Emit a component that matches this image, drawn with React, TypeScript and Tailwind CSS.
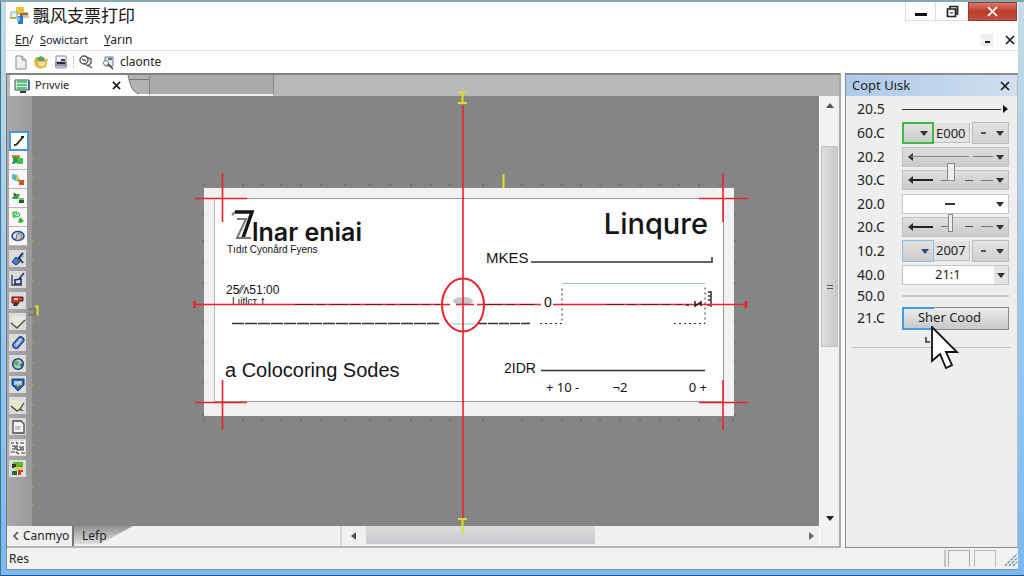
import type { ReactNode } from "react";

const toolIcons: ReactNode[] = [
  <>
    <path d="M3 12h2L12 4M10 4h3" stroke="#2b1d12" strokeWidth="1.8" fill="none" />
    <path d="M4 13l2-1" stroke="#c98a3a" strokeWidth="1" />
  </>,
  <>
    <path d="M2 3h8v3H2z" fill="#d9813c" />
    <path d="M3 5h5v6H3z" fill="#27a344" />
    <path d="M8 6h5v6H7z" fill="#45c05a" />
    <path d="M2 10h3v2H2z" fill="#4c8fc2" />
  </>,
  <>
    <path d="M2 3l5 1-1 6-4-2z" fill="#55b6b0" />
    <path d="M7 3l2 5-3 2z" fill="#d7c23e" />
    <path d="M9 9h5v5H9z" fill="#df4a2c" />
    <path d="M6 9l4-1v4z" fill="#4fbf52" />
  </>,
  <>
    <path d="M2 8l3-4h5L8 9H3z" fill="#39a33d" />
    <path d="M3 3l3 1-1 2z" fill="#222" />
    <path d="M9 8h5v5H9z" fill="#2b5a2e" />
    <path d="M9 8h5v2H9z" fill="#62c65e" />
  </>,
  <>
    <path d="M2 3l5-1 1 6-5 1z" fill="#48c751" />
    <path d="M8 3l2 3-2 2" stroke="#2d9a3a" fill="none" />
    <path d="M8 13l2-5 4 4-3 2z" fill="#2fb43c" />
    <path d="M4 4l3 3" stroke="#fff" />
  </>,
  <>
    <ellipse cx="8" cy="8" rx="6" ry="4.5" fill="#dfe9f6" stroke="#29478f" strokeWidth="1.6" />
    <path d="M6 13c0-5 1-8 3-8s3 4 3 6z" fill="#d8c690" stroke="#3465b8" />
  </>,
  <>
    <path d="M2 11l4-5 4 5-4 3z" fill="#4b7bc2" stroke="#1c3670" />
    <path d="M8 8l5-6M9 7l4 5" stroke="#23334f" strokeWidth="2" />
    <path d="M11 6l3-1" stroke="#7fb0e2" strokeWidth="1.5" />
  </>,
  <>
    <path d="M2 3v10h10" stroke="#3a4660" strokeWidth="1.4" fill="none" />
    <path d="M5 12V8l6-1v5zM9 7l5-6" stroke="#26355e" strokeWidth="1.6" fill="#d5e1f2" />
  </>,
  <>
    <path d="M2 4h11v4H9v2H2z" fill="#d23a2a" stroke="#5a1b14" />
    <path d="M4 10h5l-2 3H3z" fill="#3d2f2c" />
    <path d="M4 5h4v2H4z" fill="#f5c8ba" />
  </>,
  <>
    <path d="M0 4l5-2h10v4l-6 8z" fill="#e6eadb" />
    <path d="M1 9l6 5 8-8" stroke="#4b5140" strokeWidth="1.3" fill="none" />
  </>,
  <>
    <rect x="5" y="1" width="6" height="13" rx="3" transform="rotate(42 8 8)" fill="#7f9fe0" stroke="#24418c" strokeWidth="1.5" />
    <path d="M6 10l5-6" stroke="#dfe8ff" strokeWidth="1.3" />
  </>,
  <>
    <circle cx="8" cy="8" r="5.3" fill="#a8cfd9" stroke="#21426e" strokeWidth="1.6" />
    <path d="M5 4l4 2-2 4-3-2z" fill="#5aab45" />
    <path d="M9 9l3-2v4z" fill="#377a3d" />
  </>,
  <>
    <path d="M2 2h12v6l-6 6-6-6z" fill="#2467bb" stroke="#173c72" />
    <path d="M4 4h8v4H4z" fill="#b9cfe0" />
    <path d="M5 7h6l-3 3z" fill="#c8b35c" />
  </>,
  <>
    <path d="M1 2l10 1 2 6-6 4-6-5z" fill="#e8e6cd" />
    <path d="M1 8l6 5 4-2M14 5l-4 6 3 2" stroke="#45412f" strokeWidth="1.3" fill="none" />
  </>,
  <>
    <path d="M3 2h8l3 3v9H3z" fill="#f3f3f3" stroke="#4a4a4a" strokeWidth="1.3" />
    <path d="M5 8h6M5 10h5" stroke="#9a9a9a" />
  </>,
  <>
    <rect x="1" y="1" width="14" height="14" fill="#f7f7f7" />
    <path d="M1 3h3M6 2l2 2M10 3h4M2 6h3v3H2M7 5v5h4V7H9M13 6v5M1 12h4M6 12l3 2M11 13h4" stroke="#333" strokeWidth="1.2" fill="none" />
  </>,
  <>
    <path d="M3 1h10v5H3z" fill="#5cb531" />
    <path d="M2 3h4v4H2z" fill="#20411f" />
    <path d="M4 6h9l-2 5-6-1z" fill="#d8d14f" />
    <path d="M8 9h5v5H8z" fill="#c83f31" />
    <path d="M2 10h5v4H2z" fill="#2a6940" />
    <path d="M11 11h4v4h-4z" fill="#f2dcd6" />
  </>,
];

function Arrow({ dir = "down", color = "#333333" }: { dir?: "up" | "down" | "left" | "right"; color?: string }) {
  const paths = {
    up: "M4 2l4 5H0z",
    down: "M0 2h8L4 7z",
    left: "M6 0v8L1 4z",
    right: "M2 0l5 4-5 4z",
  };
  return (
    <svg width="8" height="8" viewBox="0 0 8 8" className="shrink-0" aria-hidden="true">
      <path d={paths[dir]} fill={color} />
    </svg>
  );
}

function Cross({ size = 10, color = "#1a1a1a" }: { size?: number; color?: string }) {
  return (
    <svg width={size} height={size} viewBox="0 0 10 10" aria-hidden="true">
      <path d="M1 1l8 8M9 1L1 9" stroke={color} strokeWidth="1.7" />
    </svg>
  );
}

function Row({ label, height, children }: { label: string; height: string; children: ReactNode }) {
  return (
    <div className={`flex items-center ${height}`}>
      <span className="w-[45px] shrink-0 text-sm">{label}</span>
      <div className="relative flex min-w-0 flex-1 items-center">{children}</div>
    </div>
  );
}

function ValueRow({ label, height, value, frame, arrow }: { label: string; height: string; value: string; frame: string; arrow: string }) {
  return (
    <Row label={label} height={height}>
      <button aria-label={`${label} style`} className={`flex h-[22px] w-8 items-center justify-end bg-linear-to-b from-[#e2e2e2] to-[#cbcbcb] pr-1 ${frame}`}>
        <Arrow color={arrow} />
      </button>
      <input aria-label={`${label} value`} defaultValue={value} className="h-5 w-9 min-w-0 flex-1 border-r border-b border-[#bdbdbd] bg-[#e2e2e2] pl-0.5 text-[13px]" />
      <button aria-label={`${label} unit`} className="ml-0.5 flex h-[22px] w-[37px] items-center justify-between border border-[#bcbcbc] bg-linear-to-b from-[#e4e4e4] to-[#cfcfcf] pr-1 pl-2">
        <span className="h-0.5 w-[5px] bg-[#555]" />
        <Arrow />
      </button>
    </Row>
  );
}

function SliderRow({ label, height, thumb }: { label: string; height: string; thumb: string }) {
  return (
    <Row label={label} height={height}>
      <div className="flex h-5 flex-1 items-center border border-[#c2c2c2] bg-linear-to-b from-[#dfdfdf] to-[#cacaca] px-1">
        <Arrow dir="left" />
        <span className="-ml-1 h-0.5 w-[22px] bg-[#222]" />
        <span className="ml-2 h-px w-2 bg-[#777]" />
        <span className="ml-4 h-px w-2 bg-[#555]" />
        <span className="ml-2 h-px w-3 bg-[#777]" />
        <span className="ml-auto"><Arrow /></span>
      </div>
      <input
        type="range"
        aria-label={`${label} position`}
        defaultValue={45}
        className={`absolute inset-x-0 h-5 w-full appearance-none bg-transparent [&::-webkit-slider-thumb]:h-[18px] [&::-webkit-slider-thumb]:appearance-none [&::-webkit-slider-thumb]:border [&::-webkit-slider-thumb]:border-[#888] [&::-webkit-slider-thumb]:bg-[#eeeeee] ${thumb}`}
      />
    </Row>
  );
}

const topTicks = [204, 222, 243, 262, 281, 301, 321, 345, 370, 390, 411, 431, 450, 483, 522, 542, 562, 581, 600, 620, 640, 660, 679, 699, 720, 733];
const sideTicks = [214, 241, 262, 283, 322, 342, 362, 382, 415];
const rulerTicks = [158, 178, 198, 218, 241, 260, 281, 322, 342, 363, 385, 405, 425, 445, 466, 487, 505];

function Cheque() {
  return (
    <article className="absolute top-[92px] left-[172px] h-[228px] w-[530px] bg-[#f1f1f1] text-[#151515]">
      <div className="absolute inset-x-2.5 top-2.5 bottom-3.5 border border-[#9b9b9b] border-l-[#a8bcc0] bg-[#fdfdfd]" />
      <h1 className="absolute top-7 left-12 font-['Inter',sans-serif] text-[25px]/8 font-semibold whitespace-nowrap">lnar eniai</h1>
      <p className="absolute top-[54px] left-[23px] font-['Liberation_Sans',sans-serif] text-[10px]/4 whitespace-nowrap">Tıdıt Cyonård Fyens</p>
      <h2 className="absolute top-5 right-[26px] font-['Inter',sans-serif] text-[29px]/8 font-medium">Linqure</h2>
      <span className="absolute top-[60px] left-[282px] font-['Liberation_Sans',sans-serif] text-[15px]/5">MKES</span>
      <p className="absolute top-24 left-[22px] font-['Liberation_Sans',sans-serif] text-xs/3 whitespace-nowrap">25⁄⁄ʌ51:00</p>
      <p className="absolute top-27 left-7 font-['Liberation_Sans',sans-serif] text-[10px]/3 whitespace-nowrap">Lıitlст. t</p>
      <span className="absolute top-[104px] left-[340px] font-['Liberation_Sans',sans-serif] text-sm/5">0</span>
      <p className="absolute top-[170px] left-[21px] font-['Liberation_Sans',sans-serif] text-xl/6 whitespace-nowrap">a Colocoring Sodes</p>
      <span className="absolute top-[170px] left-[300px] font-['Liberation_Sans',sans-serif] text-sm/5">2IDR</span>
      <div className="absolute top-[189px] left-[342px] flex w-[161px] justify-between text-[13px]/5">
        <span>+ 10 -</span>
        <span className="mr-7">¬2</span>
        <span>0 +</span>
      </div>
    </article>
  );
}

function Guides() {
  return (
    <svg className="pointer-events-none absolute top-0 left-0 overflow-visible" width="788" height="430" viewBox="32 96 788 430" aria-hidden="true">
      <g stroke="#41661c">
        {topTicks.map((x) => <path key={x} d={`M${x} 184v2M${x} 418v3`} opacity=".7" />)}
        {sideTicks.map((y) => <path key={y} d={`M202 ${y}h2M734 ${y}h2`} opacity=".7" />)}
        {rulerTicks.map((y) => <path key={y} d={`M32 ${y}h2`} stroke="#b3ab5a" />)}
      </g>
      <path d="M235 212h17l-9 26" stroke="#151515" strokeWidth="3.5" fill="none" />
      <path d="M232 215l3-3M237 219h9l-9 19h14" stroke="#777" strokeWidth="2" fill="none" />
      <g stroke="#333" strokeWidth="1.5" fill="none">
        <path d="M531 262h181v-5M541 370.500h164" />
        <path d="M232 323.500h208" strokeDasharray="12 1" />
        <path d="M477 323.500h53" strokeDasharray="10 1" />
        <path d="M540 323.500h22V286M674 323.500h31V286" strokeDasharray="2 3" strokeWidth="1" />
        <path d="M711 291v16M708 292h3M708 296h3M708 300h3M707 305h3" />
      </g>
      <path d="M562 283.500h143" stroke="#a7c6d3" />
      <ellipse cx="463" cy="301" rx="10" ry="4" fill="#c2c7c7" />
      <path d="M453 324h21" stroke="#7dcfc4" />
      <g stroke="#e9222f" strokeWidth="1.600" fill="none">
        <path d="M463 105v413M195 304.500h255M456 304.500h18M477 304.500h64M553 304.500h192" />
        <ellipse cx="463" cy="305" rx="21" ry="26.500" strokeWidth="2" />
        <path d="M195 198.500h52M222.500 173v49M699 198.500h49M723 173v49M195 402.500h52M222.500 380v50M699 402.500h49M723 380v50" />
        <path d="M194.500 301v7M746 301v7" strokeWidth="2.500" />
      </g>
      <path d="M295 304.500h145M485 304.500h50M606 304.500h76" stroke="#641d1d" strokeDasharray="18 3 9 5" />
      <path d="M686 305h3M695 301v5l6-4v4" stroke="#222" strokeWidth="1.500" fill="none" />
      <g stroke="#dce126" strokeWidth="2" fill="none">
        <path d="M458 92.500h9M462.500 93v11M458 103h9M503.500 174v14" />
        <path d="M458 519h9M462.500 519v15" />
        <path d="M35 306.500h2.500v9" />
      </g>
      <path d="M28 309h7v6h-7" stroke="#69695c" fill="#92928a" />
    </svg>
  );
}

export default function App() {
  return (
    <div className="flex min-h-screen flex-col border-t-2 border-t-[#82aaaa] border-b border-b-[#1e5589] border-l border-l-[#3a7594] bg-linear-to-b from-[#c5dce4] via-[#9bcaf0] to-[#7db8ef] pr-1.5 pb-[5px] pl-[5px] font-['Noto_Sans','Noto_Sans_CJK_SC',sans-serif] text-xs text-[#242424]">
      <header className="bg-[#fdfdfd]">
        <div className="flex h-[28px] items-start">
          <svg width="22" height="22" viewBox="0 0 22 22" className="mt-0.5 ml-[3px]" aria-hidden="true">
            <path d="M7 3h8v5h4v3H7z" fill="#efc43a" />
            <path d="M2 8h6v6H2z" fill="#e9f2f7" stroke="#7ba9be" />
            <path d="M1 13h6v2H1z" fill="#a5b93b" />
            <path d="M11 9h8v5h-8z" fill="#94684b" />
            <path d="M14 11h6v3h-6z" fill="#d3c3b8" />
            <path d="M9 12h5v8H9z" fill="#2979d4" />
            <path d="M8 13h3v4H8z" fill="#7eb7ec" />
          </svg>
          <span className="mt-px ml-0.5 font-['Noto_Sans_CJK_SC',sans-serif] text-[17px]/6 text-[#161616]">飄风支票打印</span>
          <div className="ml-auto flex h-[19px]">
            <button aria-label="Minimize" className="flex w-[30px] items-center justify-center border-b border-l border-[#ddd]"><span className="mt-1.5 h-[3px] w-3 bg-[#111]" /></button>
            <button aria-label="Restore" className="flex w-[33px] items-center justify-center border-b border-l border-[#ddd]">
              <svg width="13" height="13" viewBox="0 0 13 13" aria-hidden="true"><path d="M1.500 4h8v7.500h-8zM4 4V1.500h7.500V9H9.500" fill="none" stroke="#222" strokeWidth="1.700" /><path d="M4 7h3v2H4z" fill="#888" /></svg>
            </button>
            <button aria-label="Close" className="mr-px flex w-[49px] items-center justify-center border border-[#963b31] bg-linear-to-b from-[#d77a6a] via-[#bd3a2c] to-[#c4503f]"><Cross size={11} color="#ffffff" /></button>
          </div>
        </div>
        <nav className="flex h-[21px] items-center border-b border-[#e4e4e4] pr-[3px] pl-[9px]">
          <button className="w-[25px] text-left"><u>En</u>/</button>
          <button className="w-[64px] text-left text-[11px]"><u>S</u>owictart</button>
          <button className="text-left"><u>Y</u>arın</button>
          <button aria-label="Minimize document" className="mr-3 ml-auto flex h-3 w-3 items-center justify-center bg-[#eee]"><span className="mt-1 h-0.5 w-[5px] bg-[#222]" /></button>
          <button aria-label="Close document"><Cross /></button>
        </nav>
        <div className="flex h-[22px] items-center pl-[7px]">
          <button aria-label="New">
            <svg width="16" height="16" viewBox="0 0 16 16" aria-hidden="true"><path d="M3 2h6l4 4v9H3z" fill="#f0f0f0" stroke="#8c8c8c" /><path d="M9 2v4h4" fill="#ccc" stroke="#8c8c8c" /></svg>
          </button>
          <button aria-label="Open" className="ml-1">
            <svg width="16" height="16" viewBox="0 0 16 16" aria-hidden="true"><path d="M1 6l2-3h4l2 2h6l-2 8-6 2-5-3z" fill="#e2b848" /><path d="M4 4l4-2 4 2-1 3H5z" fill="#61a66e" /><path d="M5 8h8l-2 4H6z" fill="#f6dfa0" /></svg>
          </button>
          <button aria-label="Save" className="ml-1">
            <svg width="16" height="16" viewBox="0 0 16 16" aria-hidden="true"><path d="M3 2h10v6H3z" fill="#f4f5fa" stroke="#8a8a9c" /><path d="M8 5h4v2H8z" fill="#3d3d66" /><path d="M2 8h12v5H2z" fill="#8d8da4" /><path d="M4 8h8v2H4z" fill="#292941" /><path d="M3 12h10v2H3z" fill="#dadae3" stroke="#9898a6" /></svg>
          </button>
          <span className="mx-1 h-3 border-l border-dotted border-[#aaa]" />
          <button aria-label="Find">
            <svg width="16" height="16" viewBox="0 0 16 16" fill="none" stroke="#5a6069" aria-hidden="true"><circle cx="6" cy="6" r="4" strokeWidth="1.500" /><path d="M4 5l4 2M8 3l5 2v4l-3 3M10 11l4 3M6 9l4 3" strokeWidth="1.500" /></svg>
          </button>
          <button className="ml-2 flex items-center gap-1">
            <svg width="14" height="15" viewBox="0 0 14 15" fill="none" aria-hidden="true"><path d="M3 2h8v9H3z" fill="#e9eef3" stroke="#66758a" /><circle cx="4" cy="8" r="2.500" fill="#fff" stroke="#66758a" /><path d="M6 9l5 5M6 4h4" stroke="#33405a" strokeWidth="1.500" /></svg>
            claonte
          </button>
        </div>
      </header>

      <main className="flex min-h-0 flex-1 gap-1 border-l border-[#777] bg-[#f8f8f8]">
        <section className="flex min-w-0 flex-1 flex-col border-t-2 border-r-2 border-b-2 border-t-[#818181] border-r-[#a9a9a9] border-b-[#b5b5b5]">
          <div className="flex h-[21px] bg-[#b8b8b8]">
            <div className="ml-[3px] flex w-[117px] items-center bg-[#fdfdfd] pr-1.5 pl-1">
              <svg width="17" height="16" viewBox="0 0 17 16" aria-hidden="true"><path d="M1 2h14v10H1z" fill="#d7efe3" stroke="#2f4e58" /><path d="M3 4h10M3 7h10M3 10h10" stroke="#31b55e" strokeWidth="1.500" /><path d="M15 3v9" stroke="#4268a4" strokeWidth="2" /><path d="M6 14h6" stroke="#2c3534" strokeWidth="2" /></svg>
              <span className="ml-1 text-[11px]">Prıvvie</span>
              <button aria-label="Close tab" className="ml-auto"><Cross size={9} /></button>
            </div>
            <svg width="22" height="21" viewBox="0 0 22 21" aria-hidden="true"><path d="M0 0h1c2 9 3 16 11 19h10v2H0z" fill="#fdfdfd" /><path d="M1 0h21v19H12C4 16 3 9 1 0z" fill="#b1b1b1" /><path d="M1 0c2 9 3 16 11 19M2 4.500h20" stroke="#777" fill="none" /></svg>
            <div className="w-[125px] border-r border-b-2 border-l border-r-[#888] border-b-[#eeeeee] border-l-[#888] bg-[#aaaaaa]" />
          </div>
          <div className="flex flex-1">
            <div className="flex min-w-0 flex-1 flex-col">
              <div className="flex flex-1">
                <div className="flex w-[25px] flex-col items-start bg-linear-to-r from-[#aaaaaa] to-[#999999] pt-[35px] pl-0.5" role="toolbar" aria-label="Drawing tools">
                  {toolIcons.map((icon, i) => (
                    <button
                      key={i}
                      aria-label={`Tool ${i + 1}`}
                      className={
                        i === 0
                          ? "flex h-5 w-5 items-center justify-center border-2 border-[#4a97d8] bg-white"
                          : i < 6
                            ? "flex h-[19px] w-[18px] items-center justify-center border-b border-[#bbb3b8] bg-[#f8f6f7]"
                            : "mt-1 flex h-[17px] w-[17px] items-center justify-center bg-[#d9dbdc]"
                      }
                    >
                      <svg width="16" height="16" viewBox="0 0 16 16" className="shrink-0" aria-hidden="true">{icon}</svg>
                    </button>
                  ))}
                </div>
                <div className="relative z-10 min-h-[430px] flex-1 bg-[#858585]">
                  <Cheque />
                  <Guides />
                </div>
              </div>
              <div className="flex h-5 items-center bg-[#f0f0f0]">
                <button className="flex h-full w-[67px] items-center border-r-2 border-[#777] pl-1.5">
                  <svg width="6" height="8" viewBox="0 0 6 8" aria-hidden="true"><path d="M5 0L1 4l4 4" fill="none" stroke="#444" strokeWidth="1.500" /></svg>
                  <span className="ml-1">Canmyo</span>
                </button>
                <button className="relative h-full w-[60px] pl-2 text-left">
                  <svg className="absolute top-0 left-0" width="60" height="20" viewBox="0 0 60 20" aria-hidden="true"><defs><linearGradient id="fold" x1="0" y1="0" x2="0" y2="1"><stop stopColor="#909090" /><stop offset="1" stopColor="#dedede" /></linearGradient></defs><path d="M0 0h59L26 18H0z" fill="url(#fold)" /></svg>
                  <span className="relative">Lefp</span>
                </button>
                <div className="ml-auto flex h-full w-[59%] items-center border-l-2 border-[#dadada] pr-1 pl-2">
                  <Arrow dir="left" color="#555555" />
                  <div className="mx-2 flex h-full flex-1"><div className="h-[18px] w-[53%] bg-linear-to-b from-[#dcdcdf] to-[#c9c9cd]" /></div>
                  <Arrow dir="right" color="#666666" />
                </div>
              </div>
            </div>
            <div className="flex w-5 flex-col items-center border-l border-white bg-[#f1f1f1] pt-[5px] pb-6">
              <Arrow dir="up" color="#555555" />
              <div className="mt-[37px] flex h-[201px] w-[17px] flex-col items-center justify-center gap-0.5 border border-[#c2c2c2] bg-linear-to-r from-[#dededf] to-[#c8c8ca] pt-20">
                <span className="h-px w-1.5 bg-[#555]" />
                <span className="h-px w-1.5 bg-[#555]" />
              </div>
              <span className="mt-auto"><Arrow color="#222222" /></span>
            </div>
          </div>
        </section>

        <aside className="w-[173px] shrink-0 border border-t-2 border-[#8c8c8c] border-r-[#bbb] bg-[#eeeeee]">
          <div className="flex h-[21px] items-center justify-between bg-linear-to-r from-[#aec9e9] to-[#d0dff0] pr-[7px] pl-1.5 text-[13px]">
            Copt Uısk
            <button aria-label="Close panel"><Cross /></button>
          </div>
          <div className="pt-px pr-2 pl-[11px]">
            <Row label="20.5" height="h-6">
              <span className="h-px flex-1 bg-[#333]" />
              <Arrow dir="right" color="#111111" />
            </Row>
            <ValueRow label="60.C" height="h-6" value="E000" frame="border-2 border-[#3dba43]" arrow="#333333" />
            <Row label="20.2" height="h-[23px]">
              <div className="flex h-5 flex-1 items-center border border-[#c2c2c2] bg-linear-to-b from-[#dfdfdf] to-[#cacaca] px-1">
                <Arrow dir="left" />
                <span className="-ml-1 h-px w-[58px] bg-[#888]" />
                <span className="ml-1 h-px w-5 bg-[#777]" />
                <span className="ml-auto"><Arrow /></span>
              </div>
            </Row>
            <SliderRow label="30.C" height="h-6" thumb="[&::-webkit-slider-thumb]:w-2 [&::-webkit-slider-thumb]:-mt-4" />
            <Row label="20.0" height="h-[23px]">
              <button aria-label="20.0 line" className="relative flex h-5 flex-1 items-center justify-end border border-[#c8c8c8] bg-white pr-1">
                <span className="mr-[41px] h-0.5 w-2.5 bg-[#333]" />
                <Arrow />
              </button>
            </Row>
            <SliderRow label="20.C" height="h-[23px]" thumb="[&::-webkit-slider-thumb]:w-[5px] [&::-webkit-slider-thumb]:-mt-2" />
            <ValueRow label="10.2" height="h-[25px]" value="2007" frame="border border-[#8fbbe6]" arrow="#2f4c84" />
            <Row label="40.0" height="h-6">
              <select aria-label="40.0 ratio" className="h-5 flex-1 appearance-none border border-[#c2c2c2] bg-white pl-8 text-[13px]"><option>21:1</option></select>
              <span className="pointer-events-none absolute right-px flex h-[18px] w-3.5 items-center justify-center bg-[#e4e4e4]"><Arrow /></span>
            </Row>
            <Row label="50.0" height="h-[17px]"><span className="h-0.5 flex-1 bg-[#c9c9c9]" /></Row>
            <Row label="21.C" height="h-7">
              <button className="relative h-[23px] flex-1 border border-[#8a8a8a] bg-linear-to-b from-[#eeeeee] to-[#c6c6c6] pr-3 text-[13px]">
                <span className="absolute -inset-y-px -left-px w-8 border-2 border-r-0 border-[#419be8]" />
                <span className="relative">Sher Cood</span>
              </button>
              <svg className="pointer-events-none absolute top-[19px] left-[22px] z-20" width="36" height="46" viewBox="0 0 36 46" aria-hidden="true">
                <path d="M2 11v5h4" stroke="#333" fill="none" strokeWidth="1.500" />
                <path d="M8 1v34l8-7 6 14 6-3-6-13h11z" fill="#fff" stroke="#111" strokeWidth="1.800" />
              </svg>
            </Row>
          </div>
          <div className="mx-1.5 mt-[15px] border-t border-[#c2c2c2]" />
        </aside>
      </main>
      <footer className="flex h-[22px] items-center border-b border-l border-[#8795a1] bg-[#f1f1f1] pl-0.5">
        <span>Res</span>
        <div className="ml-auto flex h-[17px] gap-1 border-l-2 border-[#c4c4c4] pl-0.5">
          <span className="w-[22px] border border-[#aaaaaa] border-b-transparent" />
          <span className="w-[22px] border border-[#bdbdbd] border-b-transparent" />
        </div>
        <svg width="22" height="16" viewBox="0 0 22 16" aria-hidden="true"><path d="M9 15L21 3M13 15l8-8M17 15l4-4" stroke="#7b99aa" strokeWidth="1.500" strokeDasharray="3 1" /></svg>
      </footer>
    </div>
  );
}
